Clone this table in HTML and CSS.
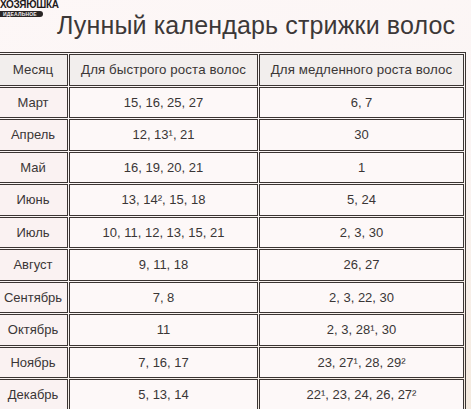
FILE: index.html
```html
<!DOCTYPE html>
<html lang="ru">
<head>
<meta charset="utf-8">
<link rel="stylesheet" href="styles.css">
</head>
<body>
<div class="page">
  <div class="head">
    <div class="logo">
      <div class="logo-top">ХОЗЯЮШКА</div>
      <div class="logo-band">ИДЕАЛЬНОЕ</div>
    </div>
    <h1 class="title">Лунный календарь стрижки волос</h1>
  </div>
  <table class="cal">
    <colgroup><col class="c1"><col class="c2"><col class="c3"></colgroup>
    <thead>
      <tr><th>Месяц</th><th>Для быстрого роста волос</th><th>Для медленного роста волос</th></tr>
    </thead>
    <tbody>
      <tr><td class="m">Март</td><td>15, 16, 25, 27</td><td>6, 7</td></tr>
      <tr><td class="m">Апрель</td><td>12, 13¹, 21</td><td>30</td></tr>
      <tr><td class="m">Май</td><td>16, 19, 20, 21</td><td>1</td></tr>
      <tr><td class="m">Июнь</td><td>13, 14², 15, 18</td><td>5, 24</td></tr>
      <tr><td class="m">Июль</td><td>10, 11, 12, 13, 15, 21</td><td>2, 3, 30</td></tr>
      <tr><td class="m">Август</td><td>9, 11, 18</td><td>26, 27</td></tr>
      <tr><td class="m">Сентябрь</td><td>7, 8</td><td>2, 3, 22, 30</td></tr>
      <tr><td class="m">Октябрь</td><td>11</td><td>2, 3, 28¹, 30</td></tr>
      <tr><td class="m">Ноябрь</td><td>7, 16, 17</td><td>23, 27¹, 28, 29²</td></tr>
      <tr><td class="m">Декабрь</td><td>5, 13, 14</td><td>22¹, 23, 24, 26, 27²</td></tr>
    </tbody>
  </table>
</div>
</body>
</html>
```

FILE: styles.css
```css
html, body {
  margin: 0;
  padding: 0;
}
body {
  width: 471px;
  height: 409px;
  overflow: hidden;
  background: linear-gradient(160deg, #fdf7f7 0%, #fbf5f4 55%, #f4eadf 100%);
  font-family: "Liberation Sans", Arial, sans-serif;
  color: #3a3636;
}
.page {
  display: flex;
  flex-direction: column;
}
.head {
  display: flex;
  align-items: flex-start;
  height: 52px;
}
.logo {
  width: 54px;
  margin-top: 0;
  display: flex;
  flex-direction: column;
  align-items: flex-start;
}
.logo-top {
  font-weight: bold;
  font-size: 10px;
  line-height: 10px;
  letter-spacing: -0.3px;
  color: #1e1a1a;
}
.logo-band {
  margin-top: 1px;
  background: #2a2626;
  color: #f0eded;
  font-size: 5px;
  line-height: 6px;
  font-weight: bold;
  padding: 0 6px 0 3px;
  border-radius: 0 3px 3px 0;
  letter-spacing: 0.2px;
}
.title {
  margin: 10px 0 0 3px;
  font-weight: normal;
  font-size: 25px;
  line-height: 30px;
  color: #3c3838;
  letter-spacing: 0.15px;
}
.cal {
  border: 1px solid #3b3533;
  border-spacing: 1px;
  border-collapse: separate;
  margin-left: -4px;
  width: 470px;
  table-layout: fixed;
  font-size: 13px;
}
.c1 { width: 70px; }
.c2 { width: 189px; }
.c3 { width: 205px; }
.cal th, .cal td {
  border: 1px solid #3b3533;
  height: 29.5px;
  padding: 0;
  text-align: center;
  vertical-align: middle;
  font-weight: normal;
  color: #3a3636;
}
.cal th {
  background: #f2eeed;
  font-size: 13.3px;
  letter-spacing: 0.1px;
}
.cal td {
  background: #fdf8f8;
}
.cal td.m {
  background: #faf2f2;
}
```
